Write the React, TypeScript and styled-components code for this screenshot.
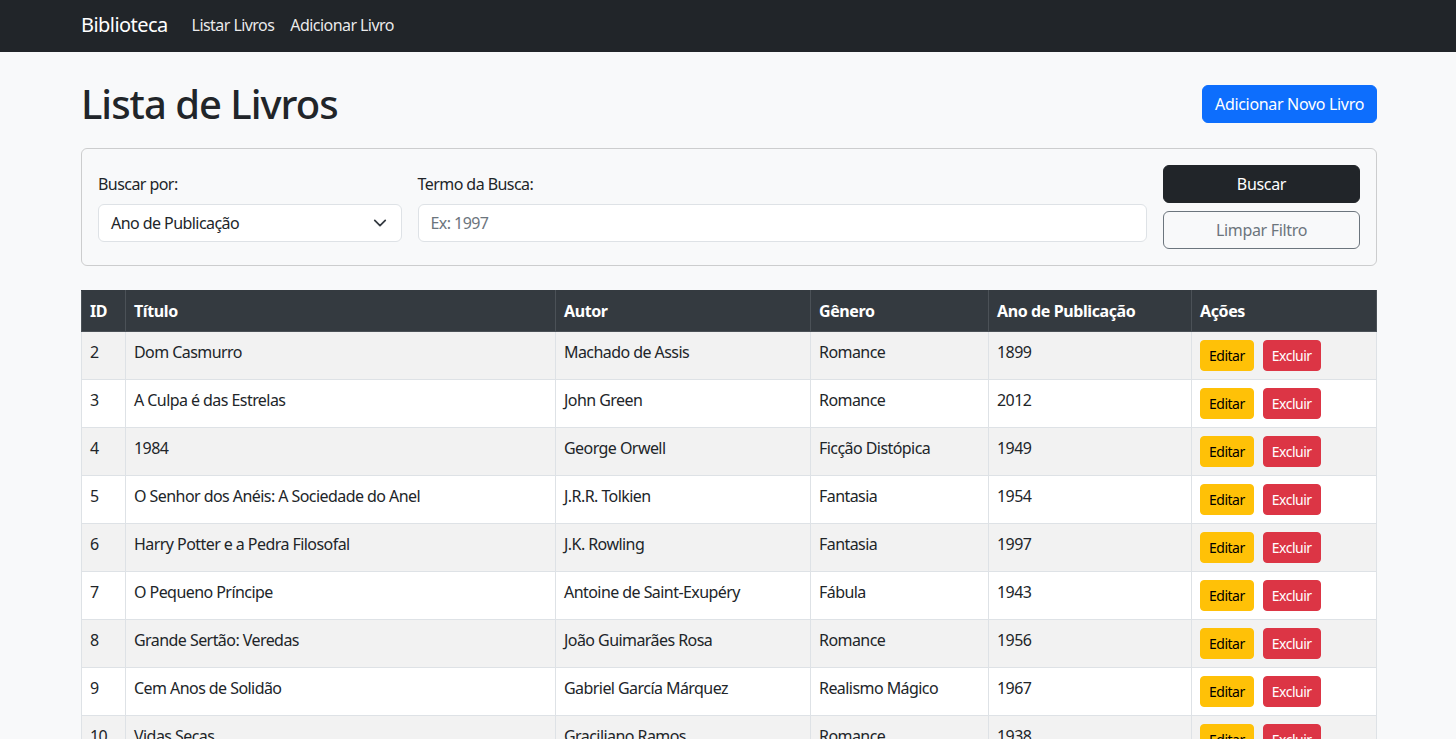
import React from "react";
import styled, { createGlobalStyle } from "styled-components";

const FONT = `"Noto Sans", "Open Sans", sans-serif`;

const Global = createGlobalStyle`
  * { box-sizing: border-box; }
  body {
    margin: 0;
    background: #f8f9fa;
    color: #212529;
    font-family: ${FONT};
    font-size: 16px;
    line-height: 1.5;
    letter-spacing: -0.035em;
  }
`;

const Navbar = styled.nav`
  background: #212529;
  height: 52px;
  display: flex;
  align-items: center;
  padding-bottom: 3px;
`;

const Container = styled.div`
  width: 1320px;
  margin: 0 auto;
  padding: 0 11px 0 13px;
`;

const NavInner = styled(Container)`
  display: flex;
  align-items: center;
  gap: 24px;
`;

const Brand = styled.a`
  color: #fff;
  font-size: 20px;
  text-decoration: none;
  line-height: 30px;
`;

const NavLinks = styled.div`
  display: flex;
  gap: 16px;
`;

const NavLink = styled.a`
  color: rgba(255, 255, 255, 0.92);
  font-size: 16px;
  text-decoration: none;
`;

const Main = styled(Container)`
  padding-top: 28px;
`;

const Header = styled.div`
  display: flex;
  justify-content: space-between;
  align-items: center;
  height: 48px;
  margin-bottom: 20px;
`;

const Title = styled.h1`
  margin: 0;
  font-size: 40px;
  font-weight: 500;
  line-height: 1.2;
  letter-spacing: -0.025em;
`;

type Variant = "primary" | "dark" | "outline" | "warning" | "danger";

const variantCss: Record<Variant, string> = {
  primary: "background:#0d6efd;border-color:#0d6efd;color:#fff;",
  dark: "background:#212529;border-color:#212529;color:#fff;",
  outline: "background:transparent;border-color:#6c757d;color:#6c757d;",
  warning: "background:#ffc107;border-color:#ffc107;color:#000;",
  danger: "background:#dc3545;border-color:#dc3545;color:#fff;",
};

const Btn = styled.button<{ $variant: Variant; $sm?: boolean; $block?: boolean }>`
  font-family: ${FONT};
  letter-spacing: ${(p) => (p.$sm ? "-0.035em" : "-0.02em")};
  font-size: ${(p) => (p.$sm ? "14px" : "16px")};
  line-height: ${(p) => (p.$sm ? "21px" : "24px")};
  padding: ${(p) => (p.$sm ? "4px 8px" : "6px 12px")};
  border-radius: ${(p) => (p.$sm ? "4px" : "6px")};
  border: 1px solid transparent;
  width: ${(p) => (p.$block ? "100%" : "auto")};
  cursor: pointer;
  ${(p) => variantCss[p.$variant]}
`;

const Card = styled.div`
  border: 1px solid rgba(0, 0, 0, 0.175);
  border-radius: 6px;
  padding: 16px;
  display: grid;
  grid-template-columns:
    calc((100% + 16px) * 3 / 12 - 16px)
    calc((100% + 16px) * 7 / 12 - 16px)
    calc((100% + 16px) * 2 / 12 - 16px);
  column-gap: 16px;
  align-items: center;
`;

const Field = styled.div`
  display: flex;
  flex-direction: column;
`;

const Label = styled.label`
  margin-bottom: 8px;
  font-size: 16px;
  line-height: 24px;
`;

const SelectBox = styled.div`
  position: relative;
  height: 38px;
  background: #fff;
  border: 1px solid #dee2e6;
  border-radius: 6px;
  padding: 6px 36px 6px 12px;
  line-height: 24px;
  display: flex;
  align-items: center;
`;

const Chevron = styled.svg`
  position: absolute;
  right: 14px;
  top: 50%;
  transform: translateY(-50%);
`;

const Input = styled.input`
  height: 38px;
  background: #fff;
  border: 1px solid #dee2e6;
  border-radius: 6px;
  padding: 6px 12px;
  font-family: ${FONT};
  letter-spacing: -0.035em;
  font-size: 16px;
  color: #212529;
  &::placeholder { color: #6c757d; }
`;

const ButtonCol = styled.div`
  display: flex;
  flex-direction: column;
  gap: 8px;
`;

const Table = styled.table`
  margin-top: 24px;
  width: 100%;
  border-collapse: collapse;
  font-size: 16px;
`;

const Th = styled.th<{ $w?: number }>`
  background: #343a40;
  color: #fff;
  font-weight: 700;
  text-align: left;
  padding: 8px;
  line-height: 24px;
  letter-spacing: -0.025em;
  border: 1px solid #4b5157;
  border-top-color: #343a40;
  width: ${(p) => (p.$w ? `${p.$w}px` : "auto")};
`;

const Tr = styled.tr<{ $striped: boolean }>`
  background: ${(p) => (p.$striped ? "#f2f2f2" : "#fff")};
`;

const Td = styled.td`
  padding: 8px;
  height: 48px;
  line-height: 24px;
  border: 1px solid #dee2e6;
  vertical-align: top;
`;

const Actions = styled.div`
  display: flex;
  gap: 9px;
`;

const books = [
  [2, "Dom Casmurro", "Machado de Assis", "Romance", 1899],
  [3, "A Culpa é das Estrelas", "John Green", "Romance", 2012],
  [4, "1984", "George Orwell", "Ficção Distópica", 1949],
  [5, "O Senhor dos Anéis: A Sociedade do Anel", "J.R.R. Tolkien", "Fantasia", 1954],
  [6, "Harry Potter e a Pedra Filosofal", "J.K. Rowling", "Fantasia", 1997],
  [7, "O Pequeno Príncipe", "Antoine de Saint-Exupéry", "Fábula", 1943],
  [8, "Grande Sertão: Veredas", "João Guimarães Rosa", "Romance", 1956],
  [9, "Cem Anos de Solidão", "Gabriel García Márquez", "Realismo Mágico", 1967],
  [10, "Vidas Secas", "Graciliano Ramos", "Romance", 1938],
];

export default function App() {
  return (
    <>
      <Global />
      <Navbar>
        <NavInner>
          <Brand href="#">Biblioteca</Brand>
          <NavLinks>
            <NavLink href="#">Listar Livros</NavLink>
            <NavLink href="#">Adicionar Livro</NavLink>
          </NavLinks>
        </NavInner>
      </Navbar>
      <Main>
        <Header>
          <Title>Lista de Livros</Title>
          <Btn $variant="primary">Adicionar Novo Livro</Btn>
        </Header>
        <Card>
          <Field>
            <Label>Buscar por:</Label>
            <SelectBox>
              Ano de Publicação
              <Chevron width="14" height="14" viewBox="0 0 16 16">
                <path d="m2 5 6 6 6-6" fill="none" stroke="#343a40" strokeWidth="2" strokeLinecap="round" strokeLinejoin="round" />
              </Chevron>
            </SelectBox>
          </Field>
          <Field>
            <Label>Termo da Busca:</Label>
            <Input placeholder="Ex: 1997" />
          </Field>
          <ButtonCol>
            <Btn $variant="dark" $block>Buscar</Btn>
            <Btn $variant="outline" $block>Limpar Filtro</Btn>
          </ButtonCol>
        </Card>
        <Table>
          <thead>
            <tr>
              <Th $w={44}>ID</Th>
              <Th $w={430}>Título</Th>
              <Th $w={255}>Autor</Th>
              <Th $w={178}>Gênero</Th>
              <Th $w={203}>Ano de Publicação</Th>
              <Th>Ações</Th>
            </tr>
          </thead>
          <tbody>
            {books.map((b, i) => (
              <Tr key={b[0]} $striped={i % 2 === 0}>
                <Td>{b[0]}</Td>
                <Td>{b[1]}</Td>
                <Td>{b[2]}</Td>
                <Td>{b[3]}</Td>
                <Td>{b[4]}</Td>
                <Td>
                  <Actions>
                    <Btn $variant="warning" $sm>Editar</Btn>
                    <Btn $variant="danger" $sm>Excluir</Btn>
                  </Actions>
                </Td>
              </Tr>
            ))}
          </tbody>
        </Table>
      </Main>
    </>
  );
}
